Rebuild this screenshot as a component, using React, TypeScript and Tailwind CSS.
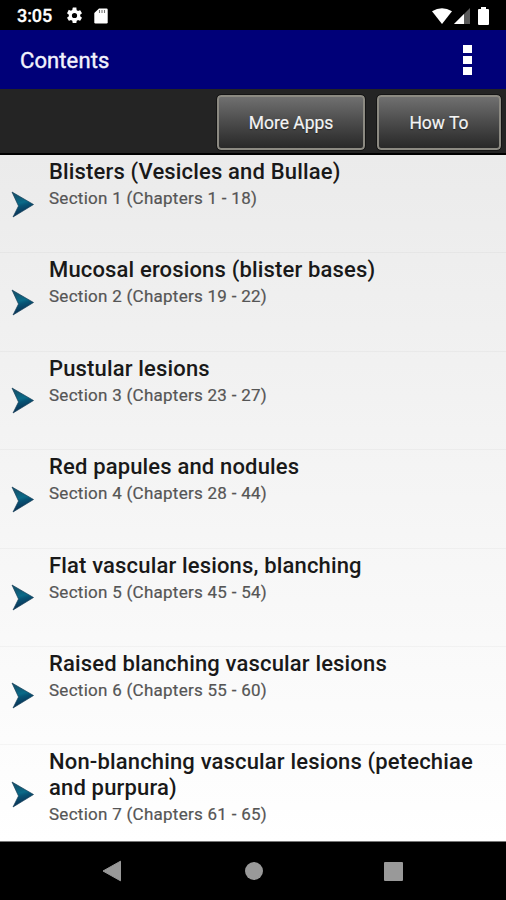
const sections = [
  { title: "Blisters (Vesicles and Bullae)", sub: "Section 1 (Chapters 1 - 18)" },
  { title: "Mucosal erosions (blister bases)", sub: "Section 2 (Chapters 19 - 22)" },
  { title: "Pustular lesions", sub: "Section 3 (Chapters 23 - 27)" },
  { title: "Red papules and nodules", sub: "Section 4 (Chapters 28 - 44)" },
  { title: "Flat vascular lesions, blanching", sub: "Section 5 (Chapters 45 - 54)" },
  { title: "Raised blanching vascular lesions", sub: "Section 6 (Chapters 55 - 60)" },
  { title: "Non-blanching vascular lesions (petechiae and purpura)", sub: "Section 7 (Chapters 61 - 65)" },
];

function ArrowIcon() {
  return (
    <svg className="ml-[11px] mt-[35.5px] h-[27px] w-[24px] shrink-0" viewBox="0 0 24 27">
      <defs>
        <linearGradient id="arrow" x1="0" y1="0" x2="0.25" y2="1">
          <stop offset="0.2" stopColor="#12556f" />
          <stop offset="0.5" stopColor="#0a6a88" />
          <stop offset="0.62" stopColor="#075475" />
          <stop offset="1" stopColor="#0a2c50" />
        </linearGradient>
      </defs>
      <path d="M1 1L22.5 13.5L2 26L7.5 15Z" fill="url(#arrow)" stroke="#163e58" strokeWidth="0.7" />
    </svg>
  );
}

function StatusBar() {
  return (
    <div className="flex h-[30px] shrink-0 items-center bg-black pl-[17px] pr-[17px] pt-px text-white">
      <span className="w-[48px] text-[18px] font-medium leading-[30px] tracking-[-0.1px] [-webkit-text-stroke:0.3px_#fff]">3:05</span>
      <svg className="h-[19px] w-[19px]" viewBox="0 0 24 24" fill="#fff">
        <path d="M19.14 12.94c.04-.3.06-.61.06-.94s-.02-.64-.07-.94l2.03-1.58a.49.49 0 0 0 .12-.61l-1.92-3.32a.49.49 0 0 0-.59-.22l-2.39.96a7 7 0 0 0-1.62-.94l-.36-2.54A.48.48 0 0 0 13.92 2h-3.84a.48.48 0 0 0-.48.41l-.36 2.54a7 7 0 0 0-1.62.94l-2.39-.96a.49.49 0 0 0-.59.22L2.74 8.87a.48.48 0 0 0 .12.61l2.03 1.58a7 7 0 0 0 0 1.88l-2.03 1.58a.49.49 0 0 0-.12.61l1.92 3.32c.12.22.37.29.59.22l2.39-.96c.5.38 1.03.7 1.62.94l.36 2.54c.05.24.24.41.48.41h3.84c.24 0 .44-.17.47-.41l.36-2.54a7 7 0 0 0 1.62-.94l2.39.96c.22.08.47 0 .59-.22l1.92-3.32a.48.48 0 0 0-.12-.61zM12 15.3a3.3 3.3 0 1 1 0-6.6 3.3 3.3 0 0 1 0 6.6z" />
      </svg>
      <svg className="ml-[10px] h-[16px] w-[14px]" viewBox="0 0 14 16">
        <path d="M5 0.5h7.5q1.2 0 1.2 1.2v12.6q0 1.2-1.2 1.2h-11q-1.2 0-1.2-1.2V5z" fill="#fff" />
        <path d="M5.5 2v3M8 2v3M10.5 2v3" stroke="#777" strokeWidth="1.1" />
      </svg>
      <svg className="ml-auto h-[16px] w-[20px]" viewBox="0 0 20 16">
        <path d="M0 3.2Q10-2.6 20 3.2L10 16Z" fill="#fff" />
      </svg>
      <svg className="ml-[2px] h-[16px] w-[16px]" viewBox="0 0 16 16">
        <path d="M16 0V16H0Z" fill="#5a5a5a" />
        <path d="M10 6V16H0Z" fill="#fff" />
      </svg>
      <svg className="ml-[8px] h-[18px] w-[11px]" viewBox="0 0 11 18">
        <path d="M3 0h5v2h2q1 0 1 1v14q0 1-1 1H1q-1 0-1-1V3q0-1 1-1h2z" fill="#fff" />
      </svg>
    </div>
  );
}

const buttonStyle =
  "h-[55px] rounded-[4px] border-2 border-[#8c8a82] bg-linear-to-b from-[#707070] via-[#4b4b4b] to-[#292929] pt-px text-[17.5px] text-[#f4f4f4] outline outline-1 outline-[#151515] [-webkit-text-stroke:0.2px_#f4f4f4] [text-shadow:0_1px_1px_#222]";

export default function App() {
  return (
    <div className="flex h-[900px] w-[506px] flex-col overflow-hidden bg-black font-['Roboto',sans-serif]">
      <StatusBar />
      <header className="flex h-[59px] shrink-0 items-center justify-between bg-[#000078] pl-[20px] pr-[34px]">
        <h1 className="pt-[2px] text-[22px] font-normal tracking-[0.1px] text-[#f2f2fc] [-webkit-text-stroke:0.4px_#f2f2fc]">Contents</h1>
        <div className="flex flex-col gap-[3px]">
          <i className="h-[8px] w-[9px] bg-white" />
          <i className="h-[8px] w-[9px] bg-white" />
          <i className="h-[8px] w-[9px] bg-white" />
        </div>
      </header>
      <div className="flex h-[66px] shrink-0 justify-end gap-[12px] border-b-2 border-black bg-[#242424] pr-[5px] pt-[6px]">
        <button className={buttonStyle + " w-[148px]"}>More Apps</button>
        <button className={buttonStyle + " w-[124px]"}>How To</button>
      </div>
      <main className="h-[687px] shrink-0 overflow-hidden border-b border-[#777] bg-linear-to-b from-[#ebebeb] via-[#f5f5f5] to-white">
        {sections.map((s) => (
          <div key={s.sub} className="flex h-[98.4px] border-b border-black/[0.03]">
            <ArrowIcon />
            <div className="ml-[14px] w-[440px] pt-[4px]">
              <h2 className="text-[22px] font-medium leading-[26px] tracking-[0.16px] text-[#191919]">{s.title}</h2>
              <p className="text-[17px] leading-[26px] tracking-[0.27px] text-[#555] [-webkit-text-stroke:0.2px_#555]">{s.sub}</p>
            </div>
          </div>
        ))}
      </main>
      <nav className="flex h-[58px] shrink-0 items-center justify-between bg-black pl-[102px] pr-[103px]">
        <svg className="h-[22px] w-[20px]" viewBox="0 0 20 22"><path d="M1 11L18.5 1.2V20.8Z" fill="#999" stroke="#999" strokeLinejoin="round" /></svg>
        <i className="ml-px h-[18px] w-[18px] rounded-full bg-[#999]" />
        <i className="h-[19px] w-[19px] rounded-[1px] bg-[#999]" />
      </nav>
    </div>
  );
}
